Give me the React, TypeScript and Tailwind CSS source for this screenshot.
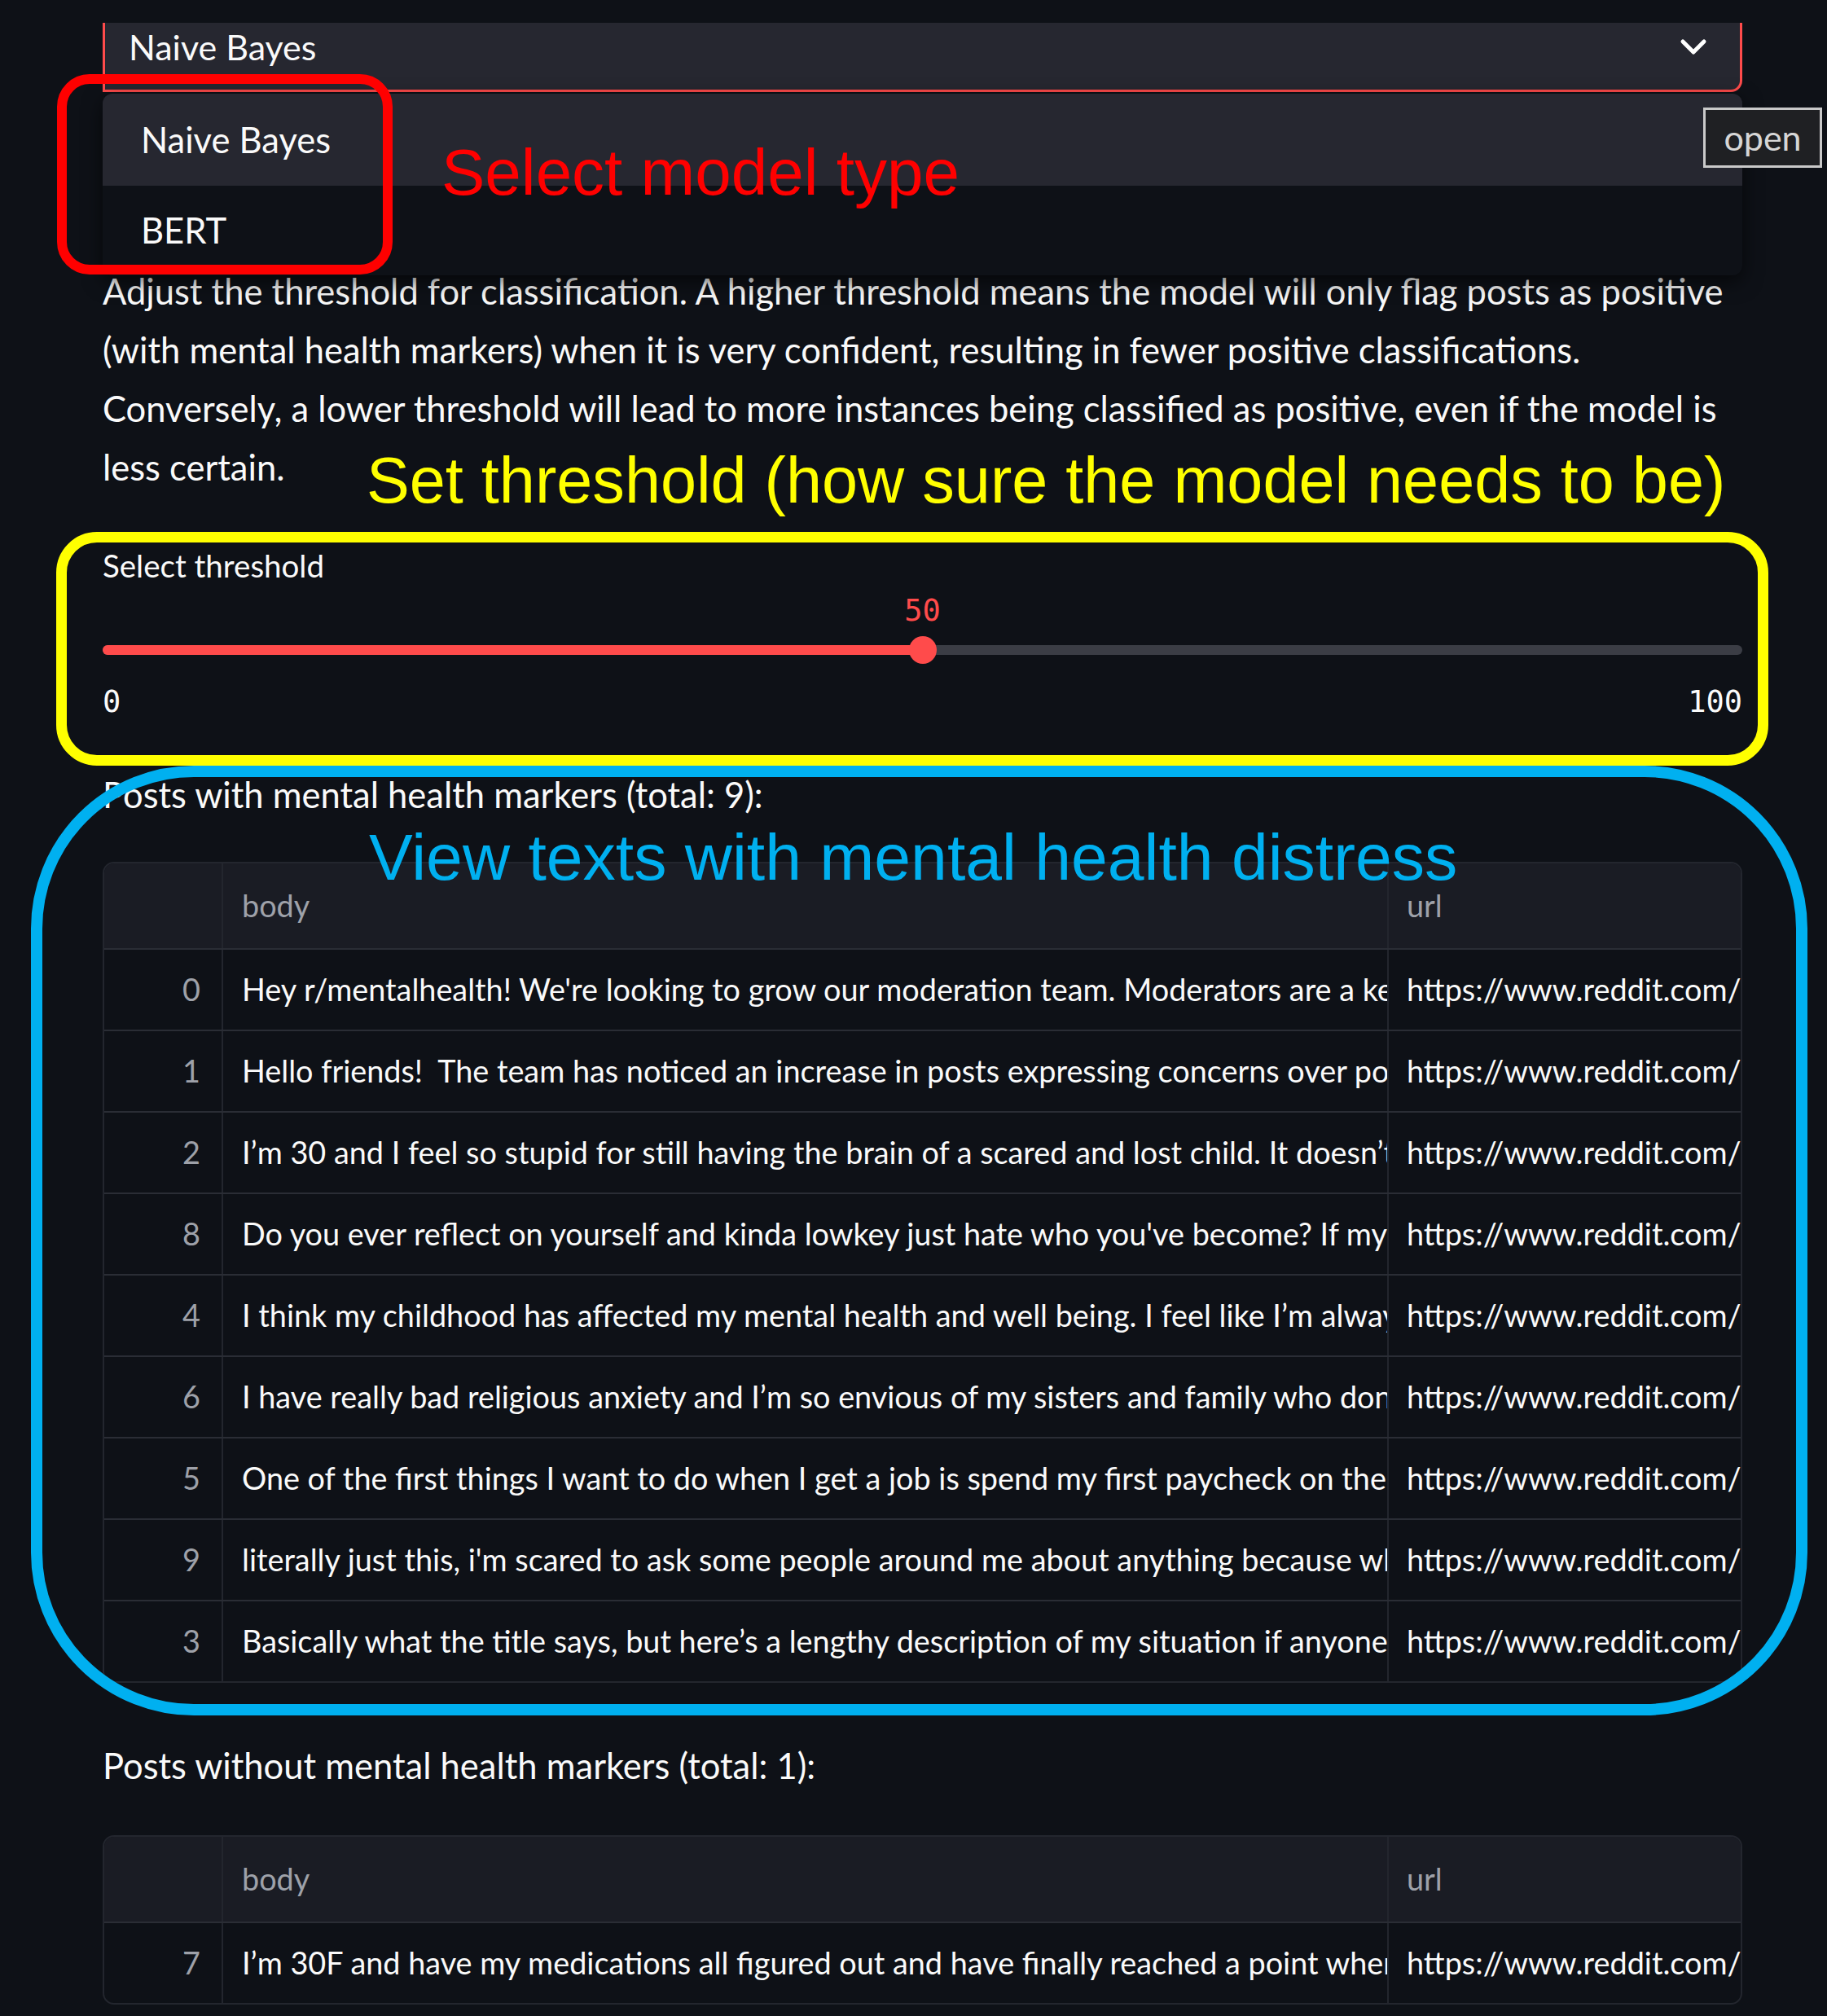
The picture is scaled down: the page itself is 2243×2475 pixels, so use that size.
import React from 'react'

type Post = { idx: string, body: string, url: string }

const url = 'https://www.reddit.com/r/'

const withMarkers: Post[] = [
  { idx: '0', body: "Hey r/mentalhealth! We're looking to grow our moderation team. Moderators are a key part", url },
  { idx: '1', body: 'Hello friends!  The team has noticed an increase in posts expressing concerns over politics', url },
  { idx: '2', body: 'I’m 30 and I feel so stupid for still having the brain of a scared and lost child. It doesn’t feel', url },
  { idx: '8', body: "Do you ever reflect on yourself and kinda lowkey just hate who you've become? If my younger", url },
  { idx: '4', body: 'I think my childhood has affected my mental health and well being. I feel like I’m always on', url },
  { idx: '6', body: 'I have really bad religious anxiety and I’m so envious of my sisters and family who don’t', url },
  { idx: '5', body: 'One of the first things I want to do when I get a job is spend my first paycheck on therapy', url },
  { idx: '9', body: "literally just this, i'm scared to ask some people around me about anything because what", url },
  { idx: '3', body: 'Basically what the title says, but here’s a lengthy description of my situation if anyone wants', url },
]

const withoutMarkers: Post[] = [
  { idx: '7', body: 'I’m 30F and have my medications all figured out and have finally reached a point where I', url },
]

function DataTable({ rows }: { rows: Post[] }) {
  return (
    <div className="overflow-hidden rounded-[14px] border-2 border-[#23262e] text-[37.8px]">
      <div className="grid h-[104px] grid-cols-[144px_1431px_434px] bg-[#1a1c24] text-[#9ea1a9]">
        <div />
        <div className="flex items-center border-l-2 border-[#23262e] pl-[23px]">body</div>
        <div className="flex items-center border-l-2 border-[#23262e] pl-[22px]">url</div>
      </div>
      {rows.map((r) => (
        <div key={r.idx} className="grid h-[100px] grid-cols-[144px_1431px_434px] border-t-2 border-[#2a2d35]">
          <div className="flex items-center justify-end pr-[26px] text-[#9ea1a9]">{r.idx}</div>
          <div className="flex items-center overflow-hidden whitespace-pre border-l-2 border-[#23262e] pl-[23px]">{r.body}</div>
          <div className="flex items-center overflow-hidden whitespace-pre border-l-2 border-[#23262e] pl-[22px]">{r.url}</div>
        </div>
      ))}
    </div>
  )
}

export default function App() {
  return (
    <div className="relative h-[2475px] w-[2243px] overflow-hidden bg-[#0e1117] font-['Lato',sans-serif] text-[#fafafa]">
      <div className="ml-[126px] w-[2013px] pt-[28px]">
        {/* model select (open) */}
        <div className="flex h-[85px] items-center justify-between rounded-br-[14px] border-x-[3px] border-b-[3px] border-[#ff4b4b] bg-[#262730] pb-[22px] pl-[29px] pr-[40px]">
          <span className="text-[43px]">Naive Bayes</span>
          <svg width="34" height="22" viewBox="0 0 34 22" fill="none">
            <path d="M4 4 L17 17 L30 4" stroke="#ffffff" strokeWidth="5" strokeLinecap="round" strokeLinejoin="round" />
          </svg>
        </div>

        <p className="mt-[208px] text-[43.5px] leading-[72px]">
          <span className="block">Adjust the threshold for classification. A higher threshold means the model will only flag posts as positive</span>
          <span className="block">(with mental health markers) when it is very confident, resulting in fewer positive classifications.</span>
          <span className="block">Conversely, a lower threshold will lead to more instances being classified as positive, even if the model is</span>
          <span className="block">less certain.</span>
        </p>

        {/* threshold slider */}
        <div className="mt-[61px] text-[38.5px] leading-[48px]">Select threshold</div>
        <div className="relative mt-[12px] h-[40px] font-['DejaVu_Sans_Mono',monospace] text-[37px] leading-[40px] text-[#ff4b4b]">
          <span className="absolute left-1/2 -translate-x-1/2">50</span>
        </div>
        <div className="relative mt-[22px] h-[12px] rounded-full bg-[#3b3d45]">
          <div className="h-full w-1/2 rounded-full bg-[#ff4b4b]" />
          <div className="absolute left-1/2 top-1/2 h-[34px] w-[34px] -translate-x-1/2 -translate-y-1/2 rounded-full bg-[#ff4b4b]" />
        </div>
        <div className="mt-[38px] flex h-[40px] justify-between font-['DejaVu_Sans_Mono',monospace] text-[37px] leading-[40px]">
          <span>0</span>
          <span>100</span>
        </div>

        <div className="mt-[57px] text-[43.5px] leading-[72px]">Posts with mental health markers (total: 9):</div>
        <div className="mt-[47px]">
          <DataTable rows={withMarkers} />
        </div>

        <div className="mt-[65px] text-[43.5px] leading-[72px]">Posts without mental health markers (total: 1):</div>
        <div className="mt-[50px]">
          <DataTable rows={withoutMarkers} />
        </div>
      </div>

      {/* dropdown menu */}
      <div className="absolute left-[126px] top-[115px] w-[2013px] overflow-hidden rounded-[12px] bg-[#0e1117] text-[43.5px] shadow-[0_8px_24px_rgba(0,0,0,0.6)]">
        <div className="flex h-[113px] items-center bg-[#262730] pl-[47px]">Naive Bayes</div>
        <div className="flex h-[110px] items-center pl-[47px]">BERT</div>
      </div>

      <div className="absolute left-[2091px] top-[132px] flex h-[74px] w-[146px] items-center justify-center border-[3px] border-[#c9c9c9] bg-[#1f2023] text-[43px] text-[#d6d6d6]">
        open
      </div>

      {/* annotations */}
      <div className="absolute left-[70px] top-[91px] h-[246px] w-[412px] rounded-[40px] border-[12px] border-[#ff0000]" />
      <div className="absolute left-[542px] top-[172px] font-['Liberation_Sans',Arial,sans-serif] text-[80px] leading-none text-[#ff0000]">Select model type</div>

      <div className="absolute left-[450px] top-[550px] font-['Liberation_Sans',Arial,sans-serif] text-[79.2px] leading-none text-[#ffff00]">Set threshold (how sure the model needs to be)</div>
      <div className="absolute left-[69px] top-[653px] h-[287px] w-[2102px] rounded-[50px] border-[13px] border-[#ffff00]" />

      <div className="absolute left-[38px] top-[940px] h-[1166px] w-[2181px] rounded-[200px] border-[14px] border-[#00b0f0]" />
      <div className="absolute left-[453px] top-[1012px] font-['Liberation_Sans',Arial,sans-serif] text-[80.5px] leading-none text-[#00b0f0]">View texts with mental health distress</div>
    </div>
  )
}
